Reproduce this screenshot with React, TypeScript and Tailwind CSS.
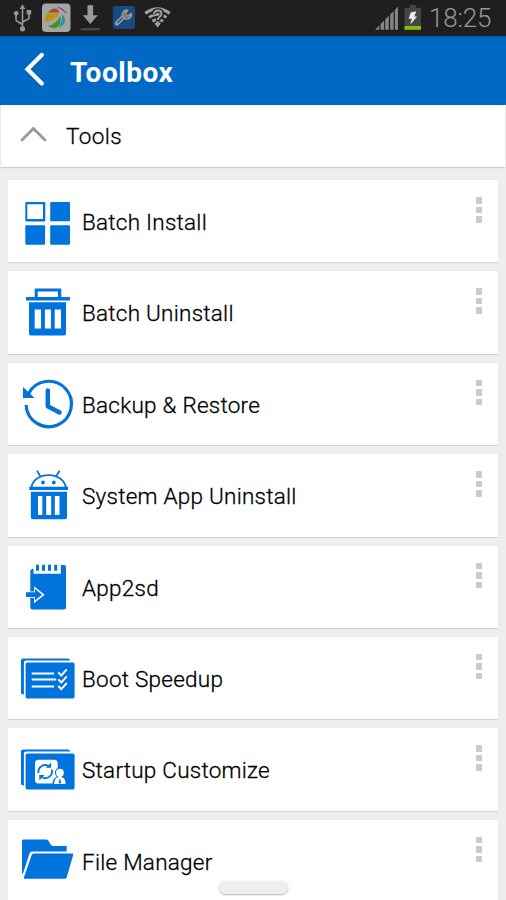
import type { ReactNode } from "react";

const BLUE = "#0073dc";

const BatchInstall = () => (
  <g fill={BLUE}>
    <path fillRule="evenodd" d="M26.3 22h18a1 1 0 0 1 1 1v17.500a1 1 0 0 1-1 1h-18a1 1 0 0 1-1-1V23a1 1 0 0 1 1-1Zm1 2.200v14.800h15.700V24.200Z" />
    <rect x="50.2" y="22" width="19.8" height="19.3" rx="1" />
    <rect x="25.3" y="45.2" width="19.8" height="19.6" rx="1" />
    <rect x="50.2" y="45.2" width="19.8" height="19.6" rx="1" />
  </g>
);

const BatchUninstall = () => (
  <g fill={BLUE}>
    <path fillRule="evenodd" d="M34.7 17.6h26.6v8.5H70v3.4H26v-3.4h8.7Zm3 3v5.4H58v-5.4Z" />
    <path fillRule="evenodd" d="M29 31.2h37v31.3a2 2 0 0 1-2 2H31a2 2 0 0 1-2-2Zm5.7 7.3v19H41v-19Zm10.2 0v19H51v-19Zm9.8 0v19H61v-19Z" />
  </g>
);

const Backup = () => (
  <g>
    <path d="M26.1 42a22.7 22.7 0 1 0 2.400-11.200" fill="none" stroke={BLUE} strokeWidth="3.2" />
    <path d="M23 23.9 34.5 34.9H23Z" fill={BLUE} />
    <path d="M47.8 27.6V43.2L59.5 49.5" fill="none" stroke={BLUE} strokeWidth="4.5" strokeLinecap="round" strokeLinejoin="round" />
  </g>
);

const SystemUninstall = () => (
  <g>
    <path d="m37 16.8 3.3 5.4M59.5 16.8l-3.3 5.4M31.2 34C34 16.8 63.2 16.8 66 34" fill="none" stroke={BLUE} strokeWidth="1.8" />
    <g fill={BLUE}>
      <rect x="29.3" y="32.7" width="38.7" height="3.2" rx=".5" />
      <circle cx="43" cy="28.5" r="1.9" />
      <circle cx="53.8" cy="28.5" r="1.9" />
      <path fillRule="evenodd" d="M30.8 37.7h36.2v25.6a2 2 0 0 1-2 2H32.8a2 2 0 0 1-2-2Zm7.2 4.2v19h4.3v-19Zm8.2 0v19h5v-19Zm8.6 0v19h4.7v-19Z" />
    </g>
  </g>
);

const App2sd = () => (
  <g fill={BLUE}>
    <path d="M30.3 24.5 32.3 22.7h1.2v5h27.3V19H64a2 2 0 0 1 2 2v40.4a2 2 0 0 1-2 2H32.3a2 2 0 0 1-2-2Z" />
    <path d="M36 18.7h3v6h-3zM42 18.7h3v6h-3zM48 18.7h3v6h-3zM54.2 18.7h3v6h-3z" />
    <path d="M24.8 45.4H34v-5.2l10.6 8.5L34 57.2V52h-9.2Z" fill="#fff" />
    <path d="M26 46.3h8.9v-3.5l7.1 5.9-7.1 5.9v-3.5H26Z" />
  </g>
);

const Panels = ({ children }: { children: ReactNode }) => (
  <g>
    <rect x="21" y="21.4" width="49" height="36" rx="2.2" fill={BLUE} />
    <rect x="23.9" y="23.6" width="52.5" height="39" rx="2.2" fill="#fff" />
    <rect x="25.6" y="25.4" width="49" height="36.2" rx="1.8" fill={BLUE} />
    {children}
  </g>
);

const BootSpeedup = () => (
  <Panels>
    <path d="M31.7 36.4H54M31.7 42.6h24.5M31.7 49.4H54" stroke="#fff" strokeWidth="2" />
    <path d="m58.3 35.3 3 3.2 5.5-6.2M58.3 42.3l3 3.2 5.5-6.2M58.3 49l3 3.2 5.5-6.2" fill="none" stroke="#fff" strokeWidth="1.9" />
  </Panels>
);

const Startup = () => (
  <Panels>
    <rect x="35" y="31.7" width="22.7" height="23.8" rx="3.5" fill="#fff" />
    <g fill="none" stroke={BLUE} strokeWidth="1.8">
      <path d="M38.5 45c-1-5.5 4.5-9.6 9.6-7.2M51.8 41.5c1.4 6-4.3 10.4-9.4 8" />
    </g>
    <path d="M45.8 39.8h5.3v-5.2ZM44.6 47h-5.3v5.4Z" fill={BLUE} />
    <path d="M52.6 56.8c0-4.6 1-6.5 4.3-7.8-3.6-3.8-2-9.2 3-9.2s6.6 5.4 3 9.2c3.3 1.3 4.4 3.2 4.4 7.8Z" fill={BLUE} />
    <circle cx="59.9" cy="44.7" r="3.9" fill="#fff" />
    <path d="M58.1 47h3.6v2.3c3 .8 3.900 3 3.900 6.700H54.200c0-3.700.900-5.900 3.900-6.700Z" fill="#fff" />
    <path d="m59.9 50-1.2 4.600 1.200 1.400 1.200-1.400Z" fill={BLUE} />
  </Panels>
);

const Folder = () => (
  <g fill={BLUE}>
    <path d="M23 19.600h23.300q1.300 0 2 1l2.200 3.700q1 1.700 2.500 1.700h13.700v5.500H32q-1.700 0-2.500 2L23 53.500h-1v-33Z" />
    <path d="M33.700 33.600h38.600q1.300 0 .9 1.400l-6.400 21.900q-.5 1.800-2 1.800H24.600q-1.100 0-.7-1.300l7.600-21.900q.7-1.900 2.200-1.900Z" />
  </g>
);

const tools = [
  { name: "Batch Install", icon: <BatchInstall /> },
  { name: "Batch Uninstall", icon: <BatchUninstall /> },
  { name: "Backup & Restore", icon: <Backup /> },
  { name: "System App Uninstall", icon: <SystemUninstall /> },
  { name: "App2sd", icon: <App2sd /> },
  { name: "Boot Speedup", icon: <BootSpeedup /> },
  { name: "Startup Customize", icon: <Startup /> },
  { name: "File Manager", icon: <Folder /> },
];

function StatusBar() {
  return (
    <div className="flex h-9 shrink-0 items-center justify-between bg-[#1f1f1f]">
      <svg width="180" height="36" viewBox="0 0 180 36">
        <g fill="none" stroke="#969696" strokeWidth="1.6">
          <path d="M22.5 7v22M16 14v5.5q0 1.5 1.5 2l5 3M29 12v5.5q0 1.5-1.5 2l-5 2.5" />
        </g>
        <g fill="#969696">
          <path d="m22.5 4.3 2.8 4.7h-5.6Z" />
          <circle cx="22.5" cy="28.8" r="2.6" />
          <circle cx="16.2" cy="13.3" r="2.4" />
          <path d="M26.7 10h4.5v4.5h-4.5z" />
        </g>
        <rect x="42" y="3.5" width="28.5" height="28.5" rx="4" fill="#a5a5a5" />
        <path d="M48 12.500q3.500-4.500 9-3.800l2.500 3.800Z" fill="#a94a1d" />
        <path d="M57 7q7 .2 10 7.200-4.500-4.300-10-7.200Z" fill="#8d45a0" />
        <path d="M46 22q-1.800-4.500.7-8.500H60q-4 6-14 8.500Z" fill="#bb9412" />
        <path d="M48 26q9-2 12.500-10.500 1.500 8-3.500 12-5 1.500-9-1.500Z" fill="#41951d" />
        <path d="M62 14q4.500 5.500 2.500 9-2 3.500-6 4 4.500-5 3.500-13Z" fill="#238fad" />
        <path d="M87.500 5.300h5.600v10h4.700L90.300 24l-7.500-8.700h4.700Z" fill="#9a9a9a" />
        <path d="M80.700 28h19v2.400h-19z" fill="#484848" />
        <rect x="112.700" y="6" width="22.300" height="23" rx="3" fill="#174a80" />
        <path d="m117 23.300 6.500-6.500" stroke="#979797" strokeWidth="4.500" strokeLinecap="round" />
        <path d="M117.500 22.800 123 17.300" stroke="#174a80" strokeWidth="1.200" />
        <path d="M127.600 10.300a4.300 4.300 0 1 0 3.500 3.500l-3 2.200-2.500-.3-.3-2.600Z" fill="#174a80" stroke="#979797" strokeWidth="2" strokeLinejoin="round" />
        <circle cx="126" cy="14.700" r="1.300" fill="#b57823" />
        <g fill="none" stroke="#a0a0a0">
          <path d="M145.300 13.400q12.200-9 24.400 0" strokeWidth="3.200" />
          <path d="M149 17.400q8.700-6.300 17.400 0M152.400 21.300q5.300-3.700 10.600 0" strokeWidth="3" />
        </g>
        <path d="m154.300 23.500 3.300 4 3.300-4q-3.300-2-6.600 0Z" fill="#a0a0a0" />
        <path d="M153.600 14.500q.2-4.200 4.300-4.200 4 .1 4 3.700 0 2-2.200 3.500-1.800 1.200-1.800 3.700" fill="none" stroke="#1f1f1f" strokeWidth="4.300" />
        <path d="M154 14.200q.5-3.600 3.900-3.600 3.600.1 3.600 3.200 0 1.900-2 3.200-1.600 1-1.600 3" fill="none" stroke="#a0a0a0" strokeWidth="2" />
        <path d="M156.400 21.500h3v2.700h-3z" fill="#a0a0a0" />
      </svg>
      <div className="flex items-center">
        <svg width="50" height="36" viewBox="374 0 50 36">
          <path d="m375 29.800 4.300-4.300v4.300Zm5.600 0V24l3.500-3.500v9.300Zm4.600 0V19.400l3.600-3.600v14Zm5 0V14.500l3.400-3.500v18.800Zm4.700 0V9.800L398 6.700v23.100Z" fill="#858585" />
          <path d="M410 5h6v2.700h5V26h-16.500V7.700h5.500Z" fill="#454545" />
          <path d="M404.500 26H421v3.800h-16.500Z" fill="#83c100" />
          <path d="m410.700 12.500 5.600-1.200-2 5.200h2.800l-7 8.200 1.800-6h-3.200Z" fill="#ededed" />
        </svg>
        <span className="w-[82px] pl-[5px] font-['Roboto'] text-[26px] font-light leading-9 tracking-[-0.2px] text-[#979797]">18:25</span>
      </div>
    </div>
  );
}

export default function App() {
  return (
    <div className="flex h-[900px] w-[506px] flex-col overflow-hidden bg-[#eeeeee] font-['Roboto',sans-serif] text-black">
      <StatusBar />
      <header className="flex h-[69px] shrink-0 items-center bg-[#0069c6] shadow-[inset_0_2px_2px_-1px_#00549c]">
        <svg className="shrink-0" width="70" height="69" viewBox="0 36 70 69">
          <path d="M42.200 56.500 28 70.500l14.200 14" fill="none" stroke="#07529a" strokeWidth="4.500" strokeLinecap="round" opacity=".6" />
          <path d="M41.800 55 27.500 69.200l14.300 14.300" fill="none" stroke="#fff" strokeWidth="4.300" strokeLinecap="round" />
        </svg>
        <h1 className="pt-[4px] text-[28px] font-bold leading-8 tracking-[0.55px] text-white">Toolbox</h1>
      </header>
      <section className="mx-px flex h-[62px] shrink-0 items-center bg-white shadow-[0_1px_1px_#cfcfcf]">
        <svg className="shrink-0" width="65" height="62" viewBox="1 105 65 62">
          <path d="m22 140 11.400-11.500L45 140" fill="none" stroke="#999" strokeWidth="2.800" strokeLinecap="round" />
        </svg>
        <h2 className="text-[22.500px] font-light leading-7 tracking-[0.4px] [-webkit-text-stroke:0.3px_#000]">Tools</h2>
      </section>
      <main className="mt-[13px] flex flex-col gap-2 px-2">
        {tools.map((tool) => (
          <article key={tool.name} className="flex h-[83.400px] shrink-0 bg-white bg-clip-content pb-px shadow-[inset_0_-1px_0_#d4d4d4,0_0_1px_#dddddd]">
            <svg className="shrink-0" width="74" height="82.400" viewBox="8 0 74 82.400">{tool.icon}</svg>
            <span className="mt-[28px] grow whitespace-nowrap text-[22.500px] font-light leading-7 tracking-[0.25px] [-webkit-text-stroke:0.3px_#000]">{tool.name}</span>
            <div className="mr-[16px] mt-[17px] flex flex-col gap-[3px]">
              <i className="h-[6.500px] w-[6.500px] bg-[#cbcbcb]" />
              <i className="h-[6.500px] w-[6.500px] bg-[#cbcbcb]" />
              <i className="h-[6.500px] w-[6.500px] bg-[#cbcbcb]" />
            </div>
          </article>
        ))}
      </main>
      <div className="absolute left-[219px] top-[881px] h-[13px] w-[69px] rounded-full bg-[#eeeeee] shadow-[0_1px_2px_#b8b8b8]" />
    </div>
  );
}
